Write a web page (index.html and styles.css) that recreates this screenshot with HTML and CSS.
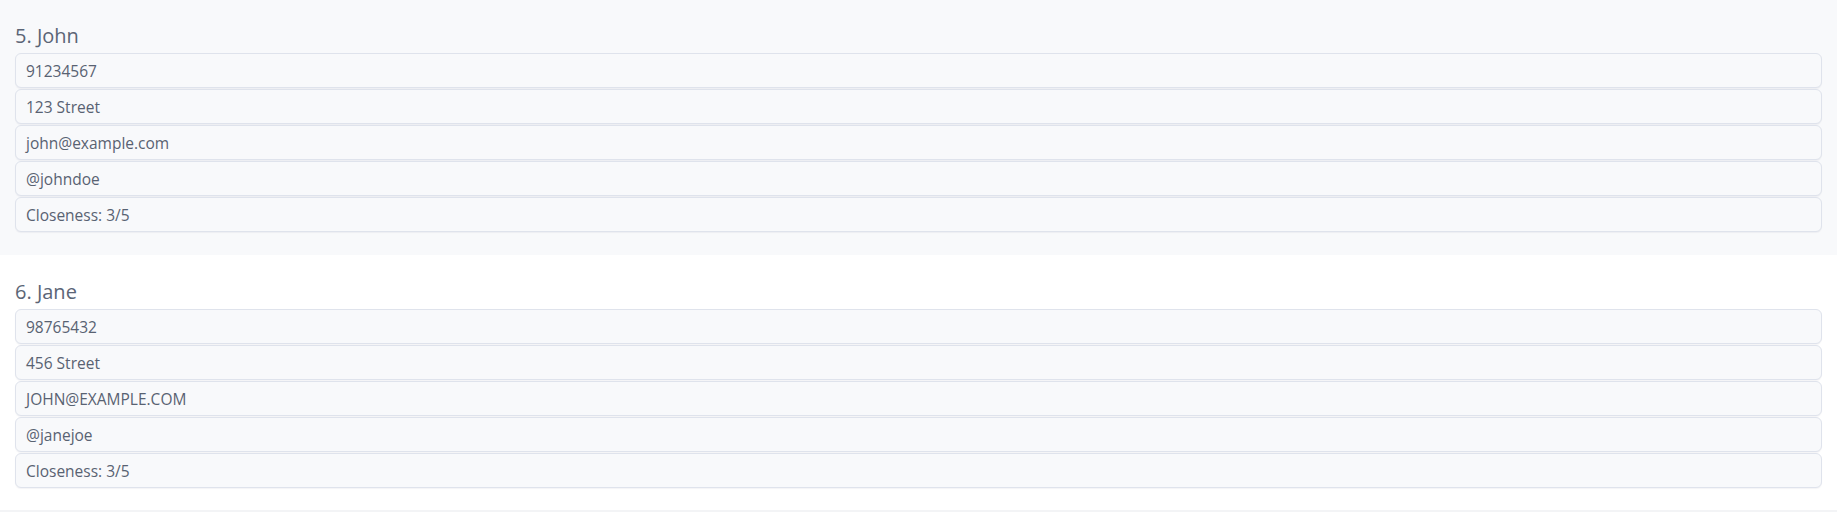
FILE: index.html
```html
<!DOCTYPE html>
<html lang="en">
<head>
<meta charset="utf-8">
<title>Contacts</title>
<link rel="stylesheet" href="styles.css">
</head>
<body>
<div class="list">
  <section class="card card-alt">
    <h2 class="name">5. John</h2>
    <div class="fields">
      <div class="field">91234567</div>
      <div class="field">123 Street</div>
      <div class="field">john@example.com</div>
      <div class="field">@johndoe</div>
      <div class="field">Closeness: 3/5</div>
    </div>
  </section>
  <section class="card">
    <h2 class="name">6. Jane</h2>
    <div class="fields">
      <div class="field">98765432</div>
      <div class="field">456 Street</div>
      <div class="field">JOHN@EXAMPLE.COM</div>
      <div class="field">@janejoe</div>
      <div class="field">Closeness: 3/5</div>
    </div>
  </section>
  <div class="card-next"></div>
</div>
</body>
</html>
```

FILE: styles.css
```css
html, body {
  margin: 0;
  padding: 0;
  background: #ffffff;
  overflow: hidden;
}

body {
  font-family: "Open Sans", "Noto Sans", sans-serif;
  color: #5a6474;
}

.list {
  display: flex;
  flex-direction: column;
}

.card {
  height: 255px;
  box-sizing: border-box;
  padding: 23px 15px 0 15px;
  background: #ffffff;
}

.card-alt {
  padding-top: 22px;
  background: #f8f9fb;
}

.name {
  margin: 0 0 3px 0;
  font-size: 20px;
  font-weight: 400;
  line-height: 28px;
  color: #5b6576;
}

.fields {
  display: flex;
  flex-direction: column;
  gap: 1px;
}

.field {
  height: 35px;
  box-sizing: border-box;
  padding: 0 10px;
  display: flex;
  align-items: center;
  background: #f8f9fb;
  border: 1px solid #dfe3ec;
  border-radius: 6px;
  box-shadow: 0 1px 1px rgba(30, 40, 80, 0.05);
  font-size: 15.5px;
  color: #586272;
}

.card-next {
  height: 40px;
  background: #f3f4f6;
}
```
